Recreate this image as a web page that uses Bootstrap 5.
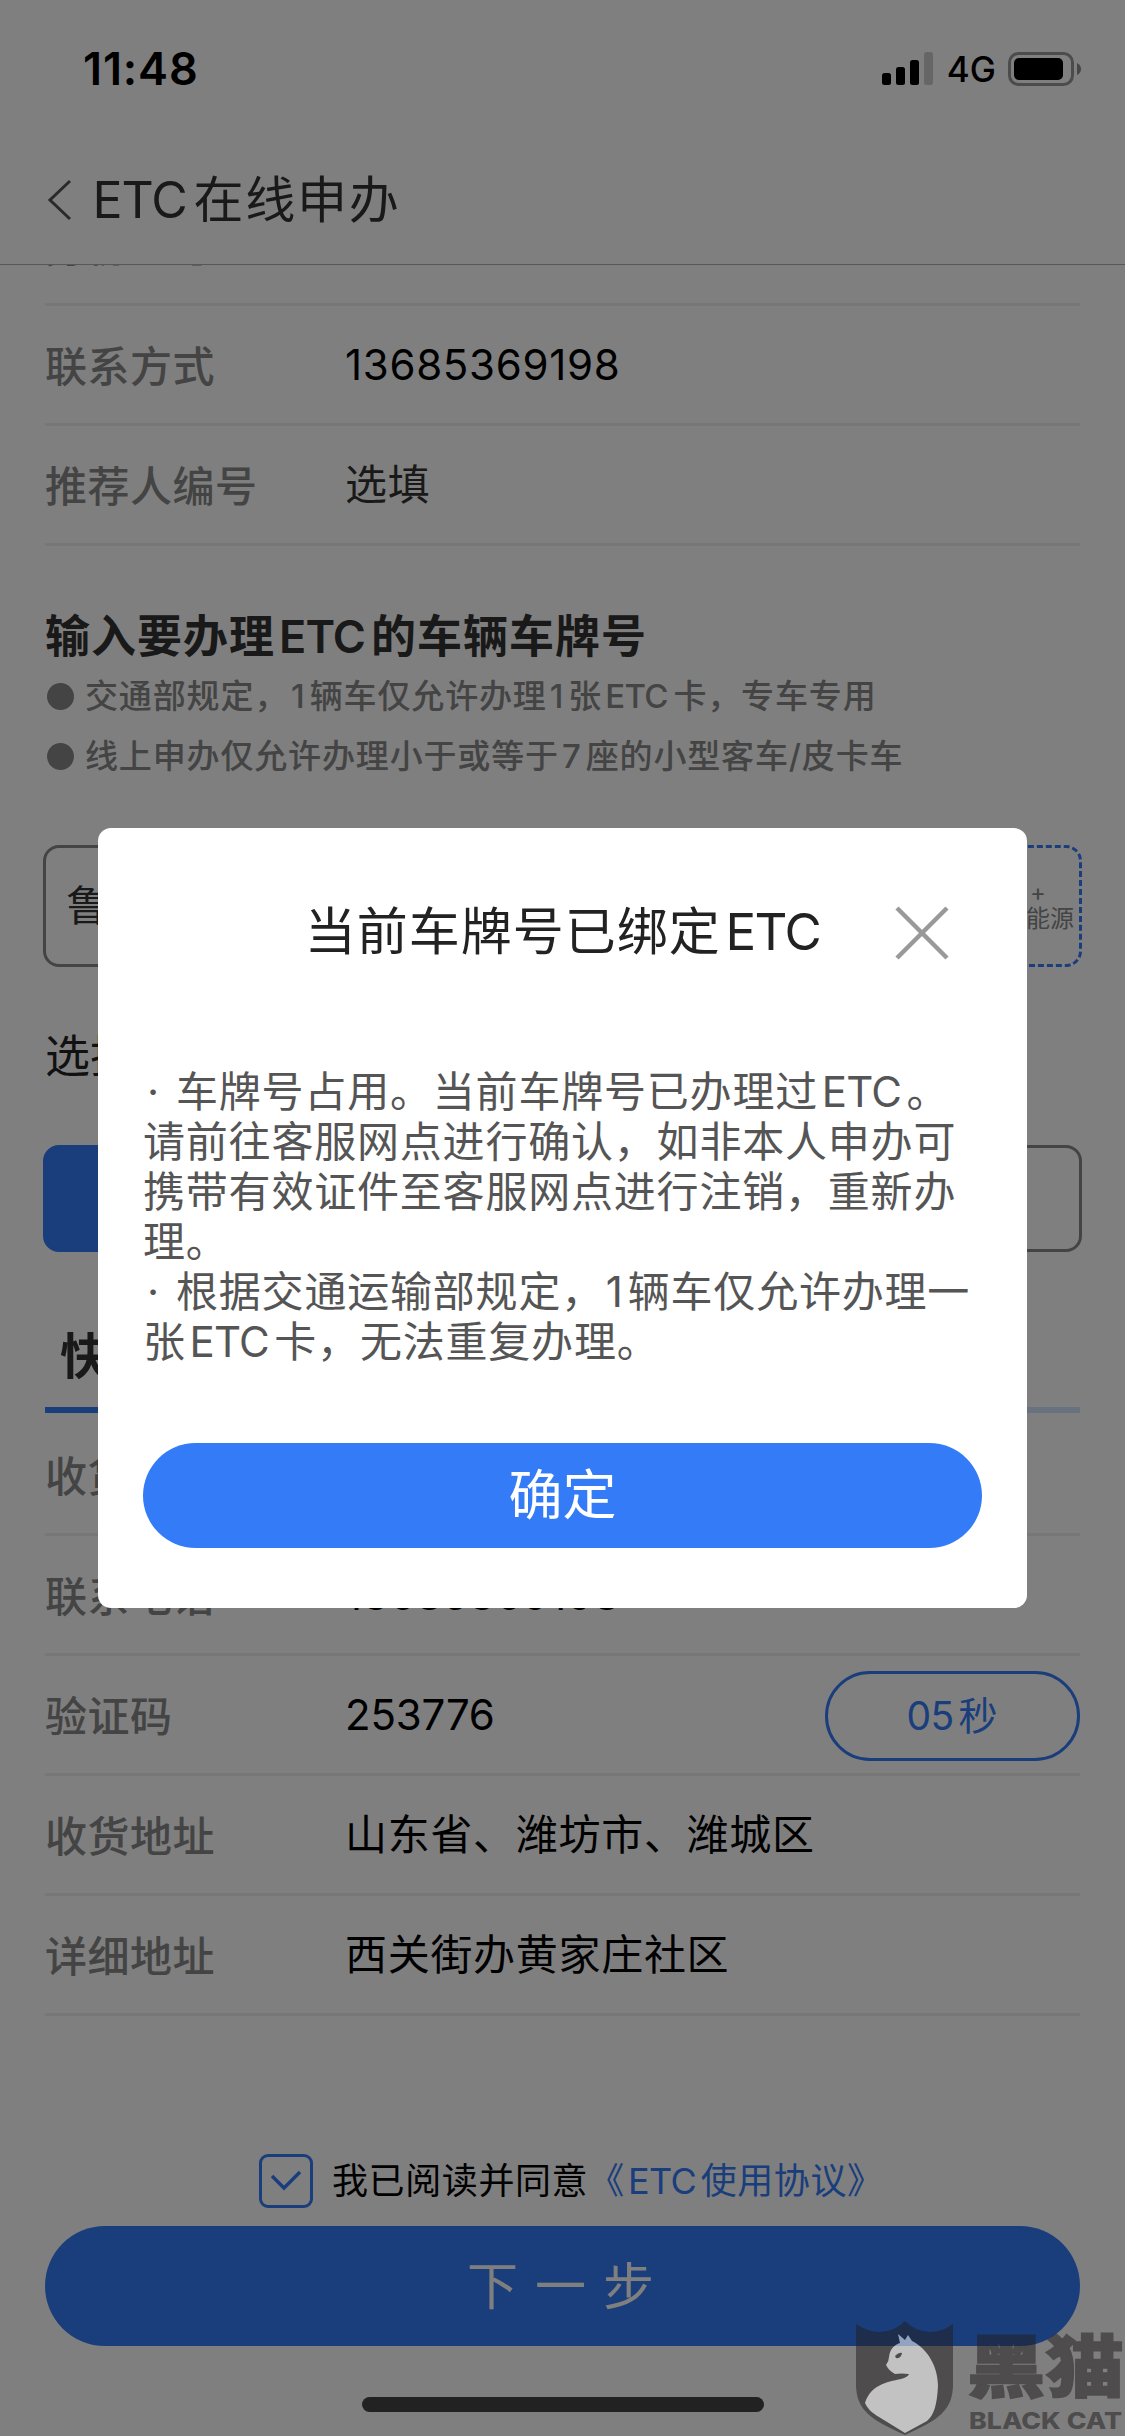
<!DOCTYPE html>
<html lang="zh-CN">
<head>
    <meta charset="UTF-8">
    <meta name="viewport" content="width=device-width, initial-scale=1">
    <title>ETC在线申办</title>
    <link rel="stylesheet" href="https://cdn.jsdelivr.net/npm/bootstrap@5.3.0/dist/css/bootstrap.min.css">
    <style>
        :root { --etc-blue: #347cf7; }
        body { font-family: Inter, "Noto Sans CJK SC", sans-serif; font-size: 42px; line-height: 60px; color: #000; background: #fff; }
        .screen { width: 1125px; height: 2436px; position: relative; overflow: hidden; white-space: nowrap; }
        .lat { letter-spacing: -.02em; margin: 0 .13em 0 .09em; }
        .top-area { height: 265px; border-bottom: 1px solid #b0b0b0; background: #fff; z-index: 2; }
        .status-bar { height: 137px; padding: 0 43px 0 83px; }
        .clock { font-size: 45px; font-weight: 600; letter-spacing: .9px; }
        .net { font-size: 35px; font-weight: 500; margin: 0 12px 0 14px; }
        .nav-title { height: 125px; padding-left: 47px; font-size: 50px; letter-spacing: 1.8px; color: #333; }
        .nav-title svg { margin-right: 16px; }
        .page-body { padding: 0 45px; margin-top: -79px; }
        .field { height: 120px; border-bottom: 3px solid #eee; padding-top: 2px; }
        .field-label { width: 300px; font-weight: 500; color: #888; letter-spacing: .5px; padding-top: 2px; }
        .field-value { letter-spacing: .7px; margin-top: -2px; }
        .soft { color: #333; }
        .head-title { font-size: 45px; font-weight: 600; color: #333; letter-spacing: 1px; margin-top: 61px; margin-bottom: -1px; }
        .note { font-size: 33px; font-weight: 500; color: #888; letter-spacing: .85px; }
        .note .lat { margin-right: .17em; }
        .dot { width: 27px; height: 27px; background: #888; margin: 0 11px 0 2px; }
        .wide { margin: 0 -2px; }
        .box { border: 3px solid #888; border-radius: 16px; }
        .plates { height: 122px; margin-top: 59px; gap: 48px; }
        .plates .box { flex: 1 0 0; min-width: 0; }
        .new-energy { border: 3px dashed var(--etc-blue); font-size: 24px; line-height: 26px; color: #888; }
        .pick { font-size: 45px; color: #222; margin-top: 60px; }
        .kinds { height: 107px; margin-top: 58px; gap: 30px; }
        .kinds .box { flex: 1; }
        .kinds .picked { background: var(--etc-blue); border-color: var(--etc-blue); color: #fff; }
        .tabs { height: 161px; margin-bottom: 3px; }
        .tabs > div { flex: 1; padding: 75px 0 0 15px; font-size: 49px; font-weight: 600; color: #333; border-bottom: 6px solid #d0e6fe; }
        .tabs > .on { border-color: var(--etc-blue); }
        .code-btn { width: 255px; height: 90px; border: 3px solid var(--etc-blue); color: var(--etc-blue); font-size: 39px; letter-spacing: 1px; }
        .digits { letter-spacing: -.2px; }
        .agree { margin: 135px 0 0 214px; height: 60px; font-size: 36px; letter-spacing: .6px; }
        .tick { width: 54px; height: 54px; border: 3px solid var(--etc-blue); border-radius: 9px; margin-right: 19px; }
        .blue { color: var(--etc-blue); }
        .next-btn { height: 120px; margin-top: 15px; background: var(--etc-blue); color: #fff; font-size: 51px; letter-spacing: 17px; text-indent: 13px; padding-top: 2px; }
        .shade { position: absolute; inset: 0; background: rgba(0, 0, 0, .5); z-index: 5; }
        .dialog { width: 929px; height: 780px; top: 828px; left: 98px; border-radius: 13px; background: #fff; z-index: 6; padding: 0 45px; }
        .dialog-title { height: 208px; font-size: 51px; letter-spacing: 1px; color: #222; }
        .dialog-title .lat { margin-right: 0; letter-spacing: -.03em; }
        .close-x { top: 76px; right: 76px; width: 58px; height: 58px; }
        .dialog-text { padding-top: 31px; line-height: 50px; color: #555; letter-spacing: .8px; height: 407px; }
        .dialog-text i { display: inline-block; width: 33px; padding-left: 4px; font-style: normal; }
        .dialog-text .one { margin: 0 .1em 0 .04em; }
        .ok-btn { height: 105px; background: var(--etc-blue); color: #fff; font-size: 54px; padding-top: 1px; }
        .home-bar { width: 402px; height: 15px; left: 362px; top: 2397px; background: #222; z-index: 7; }
        .stamp { left: 855px; top: 2298px; z-index: 8; opacity: .52; }
    </style>
</head>
<body>
<div class="screen">
    <div class="top-area position-relative">
        <div class="status-bar d-flex align-items-center">
            <span class="clock me-auto">11:48</span>
            <svg width="51" height="33" viewBox="0 0 51 33">
                <rect x="0" y="21" width="9" height="12" rx="2.5"/>
                <rect x="14" y="15" width="9" height="18" rx="2.5"/>
                <rect x="28" y="8" width="9" height="25" rx="2.5"/>
                <rect x="42" y="0" width="9" height="33" rx="2.5" opacity=".2"/>
            </svg>
            <span class="net">4G</span>
            <svg width="74" height="34" viewBox="0 0 74 34">
                <rect x="1.5" y="1.5" width="63" height="31" rx="9" fill="none" stroke="#000" stroke-width="3" opacity=".4"/>
                <rect x="6" y="6" width="49" height="22" rx="5"/>
                <path d="M69 11q4 2 4 6t-4 6z" opacity=".45"/>
            </svg>
        </div>
        <div class="nav-title d-flex align-items-center">
            <svg width="25" height="42" viewBox="0 0 25 42"><path d="M23 2L3 21l20 19" fill="none" stroke="#555" stroke-width="3"/></svg>
            <span><span class="lat">ETC</span>在线申办</span>
        </div>
    </div>

    <div class="page-body">
        <div class="field d-flex align-items-center"><div class="field-label">身份证号</div></div>
        <div class="field d-flex align-items-center">
            <div class="field-label">联系方式</div>
            <div class="field-value">13685369198</div>
        </div>
        <div class="field d-flex align-items-center">
            <div class="field-label">推荐人编号</div>
            <div class="field-value soft">选填</div>
        </div>

        <div class="head-title">输入要办理<span class="lat">ETC</span>的车辆车牌号</div>
        <div class="note d-flex align-items-center"><span class="dot rounded-circle"></span><span>交通部规定，<span class="lat">1</span>辆车仅允许办理<span class="lat">1</span>张<span class="lat">ETC</span>卡，专车专用</span></div>
        <div class="note d-flex align-items-center"><span class="dot rounded-circle"></span><span>线上申办仅允许办理小于或等于<span class="lat">7</span>座的小型客车/皮卡车</span></div>

        <div class="plates wide d-flex">
            <div class="box d-flex align-items-center justify-content-center soft">鲁</div>
            <div class="box"></div><div class="box"></div><div class="box"></div>
            <div class="box"></div><div class="box"></div><div class="box"></div>
            <div class="box new-energy d-flex flex-column align-items-center justify-content-center"><span>+</span><span>新能源</span></div>
        </div>

        <div class="pick">选择车辆类型</div>
        <div class="kinds wide d-flex">
            <div class="box picked"></div>
            <div class="box"></div>
        </div>

        <div class="tabs d-flex">
            <div class="on">快递</div>
            <div></div>
        </div>
        <div class="field d-flex align-items-center"><div class="field-label">收货人</div></div>
        <div class="field d-flex align-items-center">
            <div class="field-label">联系电话</div>
            <div class="field-value">13685369198</div>
        </div>
        <div class="field d-flex align-items-center">
            <div class="field-label">验证码</div>
            <div class="field-value digits">253776</div>
            <div class="code-btn rounded-pill ms-auto d-flex align-items-center justify-content-center"><span class="lat ms-0">05</span>秒</div>
        </div>
        <div class="field d-flex align-items-center">
            <div class="field-label">收货地址</div>
            <div class="field-value">山东省、潍坊市、潍城区</div>
        </div>
        <div class="field d-flex align-items-center">
            <div class="field-label">详细地址</div>
            <div class="field-value">西关街办黄家庄社区</div>
        </div>

        <div class="agree d-flex align-items-center">
            <span class="tick d-flex align-items-center justify-content-center">
                <svg width="32" height="24" viewBox="0 0 32 24"><path d="M2 7l12 12L30 3" fill="none" stroke="#347cf7" stroke-width="3.5"/></svg>
            </span>
            <span>我已阅读并同意<span class="blue">《<span class="lat">ETC</span>使用协议》</span></span>
        </div>
        <div class="next-btn rounded-pill d-flex align-items-center justify-content-center">下一步</div>
    </div>

    <div class="shade"></div>

    <div class="dialog position-absolute" role="dialog">
        <div class="dialog-title d-flex align-items-center justify-content-center">当前车牌号已绑定<span class="lat">ETC</span></div>
        <svg class="close-x position-absolute" viewBox="0 0 58 58"><path d="M4 4l50 50M54 4L4 54" stroke="#999" stroke-width="4.5"/></svg>
        <div class="dialog-text">
            <i>·</i>车牌号占用。当前车牌号已办理过<span class="lat">ETC</span>。<br>
            请前往客服网点进行确认，如非本人申办可<br>
            携带有效证件至客服网点进行注销，重新办<br>
            理。<br>
            <i>·</i>根据交通运输部规定，<span class="one">1</span>辆车仅允许办理一<br>
            张<span class="lat">ETC</span>卡，无法重复办理。
        </div>
        <div class="ok-btn rounded-pill d-flex align-items-center justify-content-center">确定</div>
    </div>

    <div class="home-bar rounded-pill position-absolute"></div>

    <svg class="stamp position-absolute" width="270" height="138" viewBox="0 -20 270 138" fill="#221e20">
        <path d="M1 6Q13 14 25 14Q41 13 50 3Q59 13 75 14Q87 14 98 6V66C98 93 83 102 50 117C17 102 1 93 1 66Z"/>
        <path fill="#fff" d="M43 16L50 22L53 17L57 23C73 31 83 49 83 68C82 87 79 97 72 103L50 115L24 99C17 95 12 90 10 85C16 67 31 64 46 61Q53 59 54 56Q46 55 40 56Q34 53 31 47Q34 43 34 39C35 31 39 27 45 25Z"/>
        <path d="M40 38q4-4 7-3q-1 6-6 5z"/>
        <text x="112" y="74" font-size="68" font-weight="900" stroke="#221e20" stroke-width="1.5" textLength="157" lengthAdjust="spacingAndGlyphs" font-family="Noto Sans CJK SC">黑猫</text>
        <text x="114" y="111" font-size="23" font-weight="800" textLength="153" lengthAdjust="spacingAndGlyphs" font-family="Inter">BLACK CAT</text>
    </svg>
</div>
<script src="https://cdn.jsdelivr.net/npm/bootstrap@5.3.0/dist/js/bootstrap.bundle.min.js"></script>
</body>
</html>
